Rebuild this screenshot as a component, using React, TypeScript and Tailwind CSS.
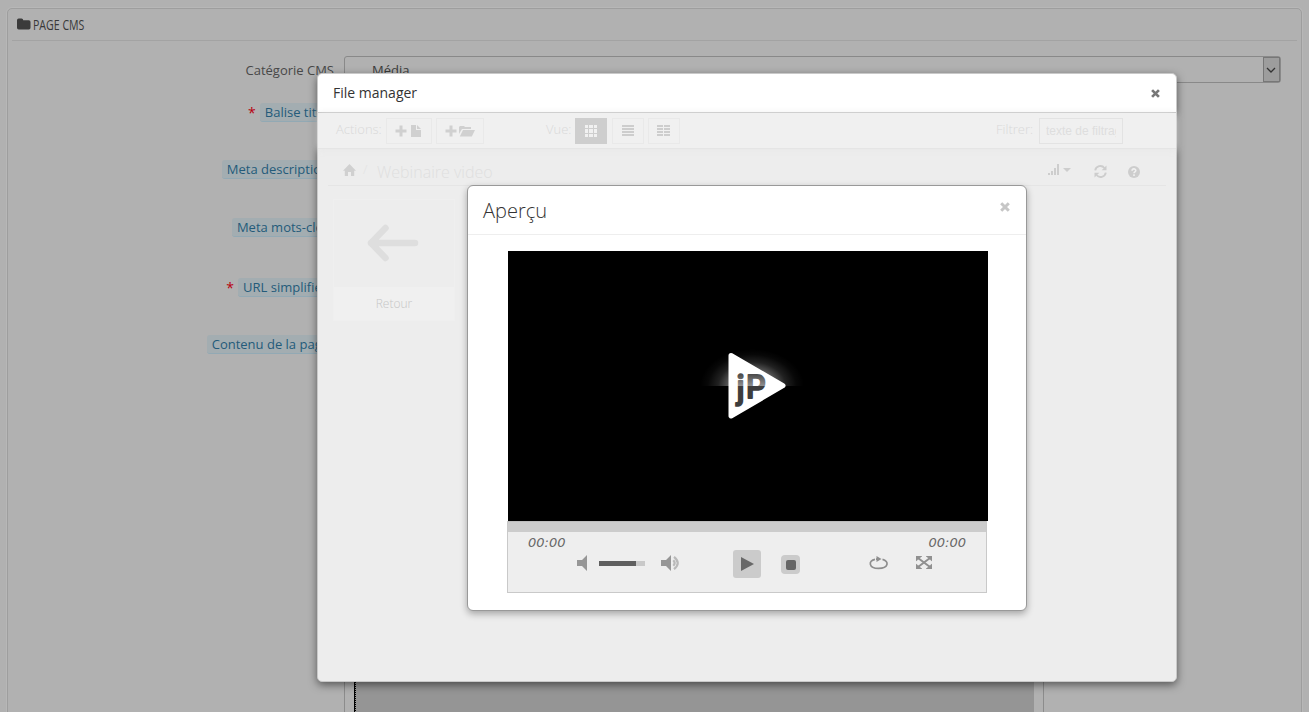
import React from "react";

const labels = [
  { text: "Balise titre", required: true, cls: "mt-[20px]" },
  { text: "Meta description", required: false, cls: "mt-[38px]" },
  { text: "Meta mots-clés", required: false, cls: "mt-[39px]" },
  { text: "URL simplifiée", required: true, cls: "mt-[41px]" },
  { text: "Contenu de la page", required: false, cls: "mt-[38px]" },
];

function FolderIcon() {
  return (
    <svg width="14" height="13" viewBox="0 0 14 13" className="shrink-0 fill-[#3b3b3b]">
      <path d="M0 2.2Q0 .5 1.7 .5H4.5Q6.2.5 6.2 2.2H11.8Q13.5 2.2 13.5 3.9V9.8Q13.5 11.5 11.8 11.5H1.7Q0 11.5 0 9.8Z" />
    </svg>
  );
}

function Close({ className }: { className: string }) {
  return (
    <svg viewBox="0 0 10 10" className={className}>
      <path d="M1.2 1.2 8.8 8.8M8.8 1.2 1.2 8.8" stroke="currentColor" strokeWidth="3" fill="none" />
    </svg>
  );
}

function Plus() {
  return (
    <svg width="12" height="12" viewBox="0 0 12 12" fill="#d0d0d0">
      <path d="M4.5 .5h3v4h4v3h-4v4h-3v-4h-4v-3h4z" />
    </svg>
  );
}

function Background() {
  return (
    <div className="h-full px-[7px] pt-2">
      <div className="h-[760px] rounded-[5px] border border-[#9e9e9e] px-1 shadow-[0_0_0_1px_#b7b7b7]">
        <div className="flex h-8 items-center border-b border-[#a3a3a3] pl-[5px]">
          <FolderIcon />
          <span className="ml-[2px] inline-block w-[53px] origin-left scale-x-[0.73] whitespace-nowrap text-[14.5px] text-[#383838]">
            PAGE CMS
          </span>
        </div>
        <div className="mt-[15px] flex h-[27px]">
          <div className="w-[322px] pt-[5px] text-right leading-[19px] text-[#484848]">Catégorie CMS</div>
          <div className="ml-[10px] flex w-[937px] rounded-[3px] border border-[#898989] text-[#3b3b3b]">
            <span className="flex-1 pl-[27px] pt-[4px] leading-[19px]">Média</span>
            <span className="flex w-[17px] items-center justify-center border border-[#777] bg-[#9d9d9d]">
              <svg width="10" height="6" viewBox="0 0 10 6" className="-ml-px shrink-0">
                <path d="M1 1 5 5 9 1" stroke="#333" strokeWidth="1.3" fill="none" />
              </svg>
            </span>
          </div>
        </div>
        <div className="flex w-[322px] flex-col items-end">
          {labels.map((l) => (
            <div key={l.text} className={`flex h-[19px] whitespace-nowrap ${l.cls}`}>
              {l.required && <span className="mr-[4px] text-[14px] leading-[19px] text-[#b8000f]">*</span>}
              <span className="rounded-[3px] border-b border-[#92a9b4] bg-[#a3adb1] px-[5px] leading-[18px] text-[#245b7a]">
                {l.text}
              </span>
            </div>
          ))}
        </div>
        <div className="ml-[332px] mt-[303px] flex h-[120px] w-[700px] border-x border-[#8c8c8c] pl-[9px]">
          <div className="w-px bg-black" />
          <div className="w-[679px] border-l border-dotted border-black bg-[#959595]" />
        </div>
      </div>
    </div>
  );
}

function Toolbar() {
  return (
    <div className="flex h-9 items-center border-b border-[#e5e5e5] bg-[#f0f0f0] pl-[18px] font-light text-[#d9d9d9] shadow-[0_1px_8px_#e8e8e8]">
      <span className="w-[50px] -mt-[2px]">Actions:</span>
      <span className="flex h-[26px] w-[46px] items-center justify-center gap-1 border border-[#e9e9e9] pr-[2px]">
        <Plus />
        <svg width="10" height="12" viewBox="0 0 10 12" fill="#d0d0d0">
          <path d="M0 0H5V5H10V12H0ZM6 0 10 4H6Z" />
        </svg>
      </span>
      <span className="ml-1 flex h-[26px] w-[48px] items-center justify-center gap-[2px] border border-[#e9e9e9]">
        <Plus />
        <svg width="16" height="12" viewBox="0 0 16 12" fill="#d0d0d0">
          <path d="M0 9V2L1 1H5L6 2H12V4H3ZM4 5H16L12.8 11.5H.8Z" />
        </svg>
      </span>
      <span className="-mt-[2px] ml-[62px] w-[29px]">Vue:</span>
      <span className="flex h-[26px] w-8 items-center justify-center bg-[#cecece]">
        <svg width="12" height="12" viewBox="0 0 12 12" fill="#f1f1f1" className="-ml-px">
          <path d="M0 0h3v3H0zM4 0h4v3H4zM9 0h3v3H9zM0 4h3v4H0zM4 4h4v4H4zM9 4h3v4H9zM0 9h3v3H0zM4 9h4v3H4zM9 9h3v3H9z" />
        </svg>
      </span>
      <span className="ml-[5px] flex h-[26px] w-8 items-center justify-center border border-[#e9e9e9]">
        <svg width="12" height="12" viewBox="0 0 12 12" fill="#cdcdcd">
          <path d="M0 0h12v2H0zM0 3h12v2H0zM0 6h12v2H0zM0 9h12v2H0z" />
        </svg>
      </span>
      <span className="ml-1 flex h-[26px] w-8 items-center justify-center border border-[#e9e9e9] pr-px">
        <svg width="13" height="12" viewBox="0 0 13 12" fill="#cdcdcd">
          <path d="M0 0h6v2H0zM7 0h6v2H7zM0 3h6v2H0zM7 3h6v2H7zM0 6h6v2H0zM7 6h6v2H7zM0 9h6v2H0zM7 9h6v2H7z" />
        </svg>
      </span>
      <span className="-mt-[2px] ml-[316px] w-[43px]">Filtrer:</span>
      <span className="h-[26px] w-[84px] border border-[#e3e3e3] px-[6px] font-['Liberation_Sans',sans-serif] text-[12px] font-normal leading-6 text-[#dedede]">
        <span className="block overflow-hidden whitespace-nowrap">texte de filtrage</span>
      </span>
    </div>
  );
}

function Breadcrumb() {
  return (
    <div className="mx-[10px] flex h-[37px] items-center border-b border-[#e5e5e5] pl-[15px] font-light">
      <svg width="13" height="12" viewBox="0 0 13 12" className="mb-[-5px]" fill="#d0d0d0">
        <path d="M6.5 0 13 6.7H11.2V12H8V8H5V12H1.8V6.7H0Z" />
      </svg>
      <span className="ml-[7px] mt-[6px] w-[14px] text-[13px] text-[#e3e3e3]">/</span>
      <span className="mt-[9px] w-[671px] text-[16px] text-[#dfdfdf]">Webinaire video</span>
      <svg width="23" height="13" viewBox="0 0 23 13" className="mt-[5px]" fill="#cdcdcd">
        <path d="M0 10h2v2H0zM3 8h2v4H3zM6 5h2v7H6zM9 1h2v11H9zM15 5h8l-4 4z" />
      </svg>
      <svg width="13" height="13" viewBox="0 0 13 13" className="ml-[23px] mt-[9px]">
        <path d="M1.2 5.3A5.2 5.2 0 0 1 10.4 3M11.8 7.7A5.2 5.2 0 0 1 2.6 10" fill="none" stroke="#cdcdcd" strokeWidth="1.9" />
        <path d="M12.5 .5V5.3H7.7ZM.5 12.5V7.7H5.3Z" fill="#cdcdcd" />
      </svg>
      <svg width="12" height="12" viewBox="0 0 12 12" className="ml-[21px] mt-[9px]">
        <circle cx="6" cy="6" r="6" fill="#cdcdcd" />
        <path d="M4.1 4.7C4.1 2.3 7.8 2.3 7.8 4.5 7.8 5.8 6 5.8 6 7.2M6 8.3V9.9" stroke="#f0f0f0" strokeWidth="1.6" fill="none" />
      </svg>
    </div>
  );
}

function Video() {
  return (
    <div className="flex h-[270px] w-[480px] items-center justify-center bg-black">
      <svg width="130" height="110" viewBox="0 0 130 110" className="-mt-[2px] ml-[14px]">
        <defs>
          <radialGradient id="glow">
            <stop offset="0" stopColor="#fff" stopOpacity="0.7" />
            <stop offset="0.4" stopColor="#fff" stopOpacity="0.4" />
            <stop offset="0.65" stopColor="#fff" stopOpacity="0.13" />
            <stop offset="0.85" stopColor="#fff" stopOpacity="0.03" />
            <stop offset="1" stopColor="#fff" stopOpacity="0" />
          </radialGradient>
          <linearGradient id="ink" gradientUnits="userSpaceOnUse" x1="0" x2="0" y1="43" y2="78">
            <stop offset="0" stopColor="#444" />
            <stop offset="0.36" stopColor="#8d8d8d" />
            <stop offset="0.37" stopColor="#3d3d3d" />
            <stop offset="1" stopColor="#3d3d3d" />
          </linearGradient>
          <clipPath id="upper">
            <rect width="130" height="56" />
          </clipPath>
        </defs>
        <ellipse cx="62" cy="56" rx="52" ry="37" fill="url(#glow)" clipPath="url(#upper)" />
        <path d="M41 25.5 93 55.7 41 86Z" fill="#fff" stroke="#fff" strokeWidth="5" strokeLinejoin="round" />
        <g
          fill="url(#ink)"
          stroke="url(#ink)"
          strokeWidth="1.8"
          strokeLinejoin="round"
          fontFamily="Inter, sans-serif"
          fontWeight="500"
        >
          <text x="46.5" y="69" fontSize="32">j</text>
          <text x="56" y="67.5" fontSize="31">P</text>
        </g>
      </svg>
    </div>
  );
}

function Speaker({ loud }: { loud?: boolean }) {
  return (
    <svg width="20" height="16" viewBox="0 0 20 16">
      <path d="M0 5H5L10 0V16L5 11H0Z" fill="#969696" />
      {loud && (
        <path d="M12.3 5.2Q15 8 12.3 10.8M13 1.8Q20.5 8 13 14.2" stroke="#b9b9b9" strokeWidth="2.2" fill="none" />
      )}
    </svg>
  );
}

function Controls() {
  return (
    <div className="h-[72px] w-[480px] border border-t-0 border-[#c9c9c9] bg-[#eee]">
      <div className="h-[11px] border-t border-[#bdbdbd] bg-[#cccccc]" />
      <div className="flex h-[16px] justify-between px-5 pt-[2px] font-['DejaVu_Sans',sans-serif] text-[13px] italic leading-[18px] text-[#666]">
        <span>00:00</span>
        <span>00:00</span>
      </div>
      <div className="flex h-[30px] items-center pl-[69px]">
        <Speaker />
        <span className="ml-[2px] flex h-[5px] w-[46px] bg-[#c9c9c9]">
          <span className="w-[37px] bg-[#5f5f5f]" />
        </span>
        <span className="ml-4 flex">
          <Speaker loud />
        </span>
        <span className="ml-[52px] mt-[2px] flex size-7 items-center justify-center rounded-[3px] bg-[#cbcbcb]">
          <svg width="13" height="14" viewBox="0 0 13 14" className="ml-px">
            <path d="M0 0 13 7 0 14Z" fill="#686868" />
          </svg>
        </span>
        <span className="ml-[20px] mt-[3px] flex size-[19px] items-center justify-center rounded-[4px] bg-[#cbcbcb]">
          <span className="size-[10px] rounded-[2px] bg-[#666]" />
        </span>
        <svg width="20" height="14" viewBox="0 0 20 14" className="ml-[69px] mt-[-1px]">
          <path d="M6 3.3C-1 4.6-.5 12.4 9.5 12.4 19.8 12.4 20.4 5.1 13.5 3.4M7 3.1H9" fill="none" stroke="#8e8e8e" strokeWidth="1.7" />
          <path d="M7.5 0 12.5 3 7.5 6Z" fill="#8e8e8e" />
        </svg>
        <svg width="16" height="13" viewBox="0 0 16 13" className="ml-[27px] mt-[-1px]">
          <path d="M2 2 14 11M14 2 2 11" stroke="#909090" strokeWidth="2" />
          <path d="M0 0H6L0 5ZM16 0H10L16 5ZM0 13H6L0 8ZM16 13H10L16 8Z" fill="#909090" stroke="#909090" strokeWidth="0.6" />
        </svg>
      </div>
    </div>
  );
}

function Preview() {
  return (
    <div className="absolute left-[467px] top-[185px] h-[426px] w-[560px] rounded-[6px] border border-[#999] bg-white shadow-[0_3px_7px_rgba(0,0,0,0.3)]">
      <div className="flex h-[49px] items-center justify-between border-b border-[#eee] pl-[15px] pr-4">
        <h3 className="mt-[2px] text-[20px] font-light text-[#333]">Aperçu</h3>
        <Close className="-mt-[6px] size-[10px] text-[#c6c6c6]" />
      </div>
      <div className="mt-4 pl-10">
        <Video />
      </div>
      <div className="pl-[39px]">
        <Controls />
      </div>
    </div>
  );
}

export default function App() {
  return (
    <div className="relative h-[712px] w-[1309px] overflow-hidden bg-[#b1b1b1] font-['Open_Sans',sans-serif] text-[13px]">
      <Background />
      <div className="absolute left-[317px] top-[73px] h-[609px] w-[860px] rounded-[5px] border border-[#c9c9c9] bg-[#ededed] shadow-[0_3px_8px_rgba(0,0,0,0.5)]">
        <div className="flex h-[39px] items-center justify-between rounded-t-[5px] border-b border-[#c0c0c0] bg-white pl-[15px] pr-4">
          <span className="-mt-[2px] text-[14px] text-[#333]">File manager</span>
          <Close className="mt-[1px] size-[9px] text-[#777]" />
        </div>
        <Toolbar />
        <Breadcrumb />
        <div className="ml-[15px] mt-[13px] flex h-[122px] w-[122px] flex-col border border-[#efefef]">
          <div className="flex h-[87px] items-center justify-center">
            <svg width="52" height="38" viewBox="0 0 52 38" className="-ml-[2px] -mt-[1px]">
              <path d="M18.5 4 4 19 18.5 34M4 19H48" fill="none" stroke="#dedede" strokeWidth="6.5" strokeLinecap="round" strokeLinejoin="round" />
            </svg>
          </div>
          <div className="flex flex-1 items-center justify-center bg-[#f0f0f0] text-[12px] font-light text-[#c6c6c6]">Retour</div>
        </div>
      </div>
      <Preview />
    </div>
  );
}
